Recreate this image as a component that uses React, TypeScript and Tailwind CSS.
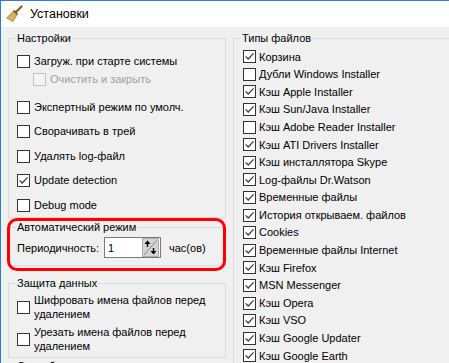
import React from "react";

function Box({ checked = false, disabled = false }: { checked?: boolean; disabled?: boolean }) {
  return (
    <span
      className={
        disabled
          ? "w-[13px] h-[13px] shrink-0 border border-[#c4c4c4] bg-[#f4f4f4] flex items-center justify-center"
          : "w-[13px] h-[13px] shrink-0 border border-[#333333] bg-white flex items-center justify-center"
      }
    >
      {checked && (
        <svg width="11" height="11" viewBox="0 0 11 11">
          <path d="M1.6 5.4 L4.2 8 L9.6 2.4" stroke="#3c3c3c" strokeWidth="1.25" fill="none" />
        </svg>
      )}
    </span>
  );
}

function Group({ label, className, children }: { label: string; className: string; children?: React.ReactNode }) {
  return (
    <div className={"relative border border-[#dcdcdc] " + className}>
      <span className="absolute left-[7px] top-[-8px] px-[1px] bg-[#f0f0f0] leading-[14px] whitespace-nowrap">
        {label}
      </span>
      {children}
    </div>
  );
}

function Broom() {
  return (
    <svg width="18" height="18" viewBox="0 0 18 18">
      <path d="M16.5 1.5 L10.5 7.5" stroke="#8a5a2a" strokeWidth="2.2" strokeLinecap="round" />
      <path d="M9 5.5 L12.5 9 L8 16.5 L1.5 13 Z" fill="#e2c67a" stroke="#a9823a" strokeWidth="0.8" />
      <path d="M9.5 7 L4 14 M10.5 8 L5.8 15.2 M11.5 9 L7.3 15.8 M8.5 6.3 L2.8 13.3" stroke="#b58e45" strokeWidth="0.7" />
      <path d="M8.6 5.6 L12.4 9.2" stroke="#7a5228" strokeWidth="1.6" />
    </svg>
  );
}

function SpinGlyph() {
  return (
    <svg width="17" height="19" viewBox="0 0 17 19">
      <rect x="0" y="0" width="17" height="19" fill="#d4d4d4" />
      <rect x="0.5" y="0.5" width="16" height="18" fill="none" stroke="#adadad" />
      <path d="M2 17 L15 2" stroke="#8a8a8a" strokeWidth="1" />
      <path d="M5.5 2.5 L2.5 6 L8.5 6 Z" fill="#000" />
      <path d="M5.5 6 L5.5 9" stroke="#000" strokeWidth="1.4" />
      <path d="M11.5 16.5 L8.5 13 L14.5 13 Z" fill="#000" />
      <path d="M11.5 10 L11.5 13" stroke="#000" strokeWidth="1.4" />
    </svg>
  );
}

const fileTypes: [string, boolean][] = [
  ["Корзина", true],
  ["Дубли Windows Installer", false],
  ["Кэш Apple Installer", true],
  ["Кэш Sun/Java Installer", true],
  ["Кэш Adobe Reader Installer", false],
  ["Кэш ATI Drivers Installer", true],
  ["Кэш инсталлятора Skype", true],
  ["Log-файлы Dr.Watson", true],
  ["Временные файлы", true],
  ["История открываем. файлов", true],
  ["Cookies", true],
  ["Временные файлы Internet", true],
  ["Кэш Firefox", true],
  ["MSN Messenger", true],
  ["Кэш Opera", true],
  ["Кэш VSO", true],
  ["Кэш Google Updater", true],
  ["Кэш Google Earth", true],
  ["Кэш Google Toolbar", true],
];

const settings: [string, boolean][] = [
  ["Сворачивать в трей", false],
  ["Удалять log-файл", false],
  ["Update detection", true],
  ["Debug mode", false],
];

export default function App() {
  return (
    <div className="w-[449px] h-[363px] overflow-hidden relative bg-[#f0f0f0] border-l border-t border-[#2b7fd4] font-['Liberation_Sans',Arial,sans-serif] text-[11px] text-black">
      <div className="h-[26px] bg-white flex items-center pl-[4px] gap-[7px]">
        <Broom />
        <span className="text-[12.5px] leading-[16px] font-['Liberation_Sans',Arial,sans-serif]">Установки</span>
      </div>

      <div className="flex items-start">
        {/* left column */}
        <div className="ml-[7px] w-[218px] flex flex-col shrink-0">
          <Group label="Настройки" className="mt-[11px] pt-[13px] pl-[8px]">
            <div className="h-[18px] flex items-center gap-[4px]">
              <Box />
              <span>Загруж. при старте системы</span>
            </div>
            <div className="h-[18px] flex items-center gap-[4px] ml-[16px] text-[#a0a0a0]">
              <Box disabled />
              <span>Очистить и закрыть</span>
            </div>
            <div className="h-[24.5px] mt-[6.75px] flex items-center gap-[4px]">
              <Box />
              <span>Экспертный режим по умолч.</span>
            </div>
            {settings.map(([t, c]) => (
              <div key={t} className="h-[24.5px] flex items-center gap-[4px]">
                <Box checked={c} />
                <span>{t}</span>
              </div>
            ))}
          </Group>

          <Group label="Автоматический режим" className="mt-[9px] pt-[9px] pb-[7px] pl-[8px]">
            <div className="h-[21px] flex items-center">
              <span className="w-[87px]">Периодичность:</span>
              <div className="w-[57px] h-[21px] bg-white border border-[#7a7a7a] flex items-center justify-between pl-[3px] pr-[1px]">
                <span>1</span>
                <SpinGlyph />
              </div>
              <span className="ml-[8px]">час(ов)</span>
            </div>
          </Group>

          <Group label="Защита данных" className="mt-[17px] pt-[9px] pb-[4px] pl-[8px]">
            <div className="flex items-center gap-[4px]">
              <Box />
              <span className="leading-[14px]">
                Шифровать имена файлов перед
                <br />
                удалением
              </span>
            </div>
            <div className="flex items-center gap-[4px] mt-[4px]">
              <Box />
              <span className="leading-[14px]">
                Урезать имена файлов перед
                <br />
                удалением
              </span>
            </div>
          </Group>

          <Group label="Способ удаления" className="mt-[8px] h-[40px]" />
        </div>

        {/* right column */}
        <Group label="Типы файлов" className="ml-[7px] mt-[11px] w-[240px] shrink-0 pt-[9px] pl-[9px]">
          {fileTypes.map(([t, c]) => (
            <div key={t} className="h-[17.6px] flex items-center gap-[3px] whitespace-nowrap">
              <Box checked={c} />
              <span>{t}</span>
            </div>
          ))}
        </Group>
      </div>

      {/* red highlight annotation */}
      <div className="absolute left-[6px] top-[217px] w-[219px] h-[53px] border-[3px] border-[#ff0000] rounded-[10px] pointer-events-none" />
    </div>
  );
}
